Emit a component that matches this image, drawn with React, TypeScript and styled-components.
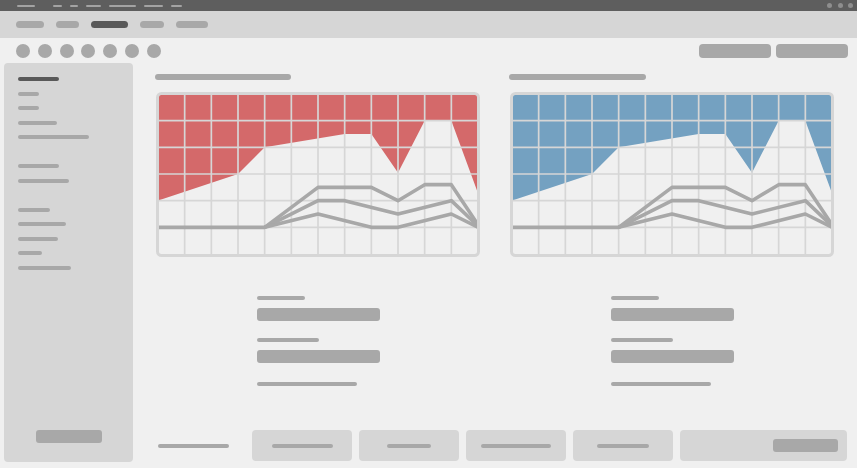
import React from "react";
import styled, { createGlobalStyle } from "styled-components";

const GlobalStyle = createGlobalStyle`
  html, body {
    margin: 0;
    padding: 0;
    background: #f0f0f0;
  }
  body {
    font-family: "Liberation Sans", Arial, sans-serif;
  }
`;

const Window = styled.div`
  width: 857px;
  height: 468px;
  display: flex;
  flex-direction: column;
  background: #f0f0f0;
  overflow: hidden;
`;

const TitleBar = styled.div`
  height: 11px;
  flex-shrink: 0;
  display: flex;
  align-items: center;
  padding: 0 4px 0 17px;
  background: #5e5e5e;
`;

const MenuGroup = styled.div`
  display: flex;
  gap: 8px;
  margin-left: 18px;
`;

const MenuLine = styled.div<{ $w: number }>`
  width: ${(p) => p.$w}px;
  height: 2px;
  border-radius: 1px;
  background: #a3a3a3;
`;

const WindowDots = styled.div`
  display: flex;
  gap: 5.5px;
  margin-left: auto;
`;

const WindowDot = styled.div`
  width: 5px;
  height: 5px;
  border-radius: 50%;
  background: #8e8e8e;
`;

const TabBar = styled.div`
  height: 27px;
  flex-shrink: 0;
  display: flex;
  align-items: center;
  gap: 12px;
  padding-left: 16px;
  background: #d6d6d6;
`;

const Tab = styled.div<{ $w: number; $active?: boolean }>`
  width: ${(p) => p.$w}px;
  height: 7px;
  border-radius: 4px;
  background: ${(p) => (p.$active ? "#595959" : "#a8a8a8")};
`;

const Toolbar = styled.div`
  height: 25px;
  flex-shrink: 0;
  display: flex;
  align-items: center;
  padding: 0 9px 0 16px;
`;

const ToolDots = styled.div`
  display: flex;
  gap: 7.8px;
`;

const ToolDot = styled.div`
  width: 14px;
  height: 14px;
  border-radius: 50%;
  background: #a8a8a8;
`;

const ToolButtons = styled.div`
  display: flex;
  gap: 5px;
  margin-left: auto;
`;

const ToolButton = styled.div`
  width: 72px;
  height: 14px;
  border-radius: 4px;
  background: #a8a8a8;
`;

const Body = styled.div`
  flex: 1;
  display: flex;
  min-height: 0;
`;

const Sidebar = styled.aside`
  width: 129px;
  margin: 0 0 6px 4px;
  padding: 14px 14px 19px;
  box-sizing: border-box;
  display: flex;
  flex-direction: column;
  background: #d6d6d6;
  border-radius: 4px;
`;

const NavList = styled.div`
  display: flex;
  flex-direction: column;
  gap: 25px;
`;

const NavGroup = styled.div`
  display: flex;
  flex-direction: column;
  gap: 10.5px;
`;

const NavLine = styled.div<{ $w: number; $active?: boolean }>`
  width: ${(p) => p.$w}px;
  height: 4px;
  border-radius: 2px;
  background: ${(p) => (p.$active ? "#595959" : "#a8a8a8")};
`;

const SidebarButton = styled.div`
  margin-top: auto;
  align-self: center;
  width: 66px;
  height: 13px;
  border-radius: 3px;
  background: #a8a8a8;
`;

const Main = styled.main`
  flex: 1;
  display: flex;
  flex-direction: column;
  padding: 11px 10px 7px 23px;
  min-width: 0;
`;

const Panels = styled.div`
  display: grid;
  grid-template-columns: 324px 324px;
  column-gap: 30px;
`;

const Panel = styled.section`
  display: flex;
  flex-direction: column;
`;

const PanelTitle = styled.div<{ $w: number }>`
  width: ${(p) => p.$w}px;
  height: 6px;
  margin-left: -1px;
  border-radius: 3px;
  background: #a8a8a8;
`;

const ChartSvg = styled.svg`
  display: block;
  margin-top: 12px;
`;

const Form = styled.div`
  align-self: center;
  width: 123px;
  margin-top: 39px;
  display: flex;
  flex-direction: column;
`;

const FieldLabel = styled.div<{ $w: number; $gap?: number }>`
  width: ${(p) => p.$w}px;
  height: 4px;
  margin-top: ${(p) => p.$gap ?? 0}px;
  border-radius: 2px;
  background: #a8a8a8;
`;

const FieldInput = styled.div`
  height: 13px;
  margin-top: 8px;
  border-radius: 3px;
  background: #a8a8a8;
`;

const Footer = styled.div`
  margin-top: auto;
  height: 31px;
  display: flex;
  align-items: center;
  gap: 7px;
  padding-left: 2px;
`;

const FooterCaption = styled.div`
  width: 71px;
  height: 4px;
  margin-right: 16px;
  border-radius: 2px;
  background: #a8a8a8;
`;

const FooterTab = styled.div`
  width: 100px;
  height: 31px;
  display: flex;
  align-items: center;
  justify-content: center;
  border-radius: 4px;
  background: #d6d6d6;
`;

const FooterTabLine = styled.div<{ $w: number }>`
  width: ${(p) => p.$w}px;
  height: 4px;
  border-radius: 2px;
  background: #a8a8a8;
`;

const FooterAction = styled.div`
  flex: 1;
  height: 31px;
  display: flex;
  align-items: center;
  justify-content: flex-end;
  padding-right: 9px;
  border-radius: 4px;
  background: #d6d6d6;
`;

const FooterButton = styled.div`
  width: 65px;
  height: 13px;
  border-radius: 3px;
  background: #a8a8a8;
`;

// grid of 12 x 6 cells, origin inset by 2px inside the frame
const CELL = 80 / 3;
const gx = (x: number) => 2 + x * CELL;
const gy = (y: number) => 2 + y * CELL;
const pts = (list: [number, number][]) =>
  list.map(([x, y]) => `${gx(x).toFixed(2)},${gy(y).toFixed(2)}`).join(" ");

const AREA: [number, number][] = [
  [0, 0], [12, 0], [12, 3.72], [11, 1], [10, 1], [9, 2.95],
  [8, 1.5], [7, 1.5], [4, 2], [3, 3], [0, 4],
];

const CURVES: [number, number][][] = [
  [[0, 5], [4, 5], [6, 3.5], [8, 3.5], [9, 4], [10, 3.4], [11, 3.4], [12, 4.9]],
  [[4, 5], [6, 4], [7, 4], [9, 4.5], [11, 4], [12, 4.95]],
  [[4, 5], [6, 4.5], [8, 5], [9, 5], [11, 4.5], [12, 5]],
];

function Chart({ id, fill }: { id: string; fill: string }) {
  return (
    <ChartSvg width={324} height={165} viewBox="0 0 324 165">
      <defs>
        <clipPath id={id}>
          <rect x={3} y={3} width={318} height={159} />
        </clipPath>
      </defs>
      <rect x={1.5} y={1.5} width={321} height={162} rx={4} fill="#f0f0f0" />
      <g clipPath={`url(#${id})`}>
        <polygon points={pts(AREA)} fill={fill} />
        {Array.from({ length: 11 }, (_, i) => (
          <line key={`v${i}`} x1={gx(i + 1)} x2={gx(i + 1)} y1={0} y2={165} stroke="#d6d6d6" strokeWidth={1.7} />
        ))}
        {Array.from({ length: 5 }, (_, i) => (
          <line key={`h${i}`} x1={0} x2={324} y1={gy(i + 1)} y2={gy(i + 1)} stroke="#d6d6d6" strokeWidth={1.7} />
        ))}
        {CURVES.map((c, i) => (
          <polyline key={i} points={pts(c)} fill="none" stroke="#a8a8a8" strokeWidth={3.6} strokeLinejoin="round" />
        ))}
      </g>
      <rect x={1.5} y={1.5} width={321} height={162} rx={4} fill="none" stroke="#d6d6d6" strokeWidth={3} />
    </ChartSvg>
  );
}

function ChartPanel({ id, fill, titleWidth }: { id: string; fill: string; titleWidth: number }) {
  return (
    <Panel>
      <PanelTitle $w={titleWidth} />
      <Chart id={id} fill={fill} />
      <Form>
        <FieldLabel $w={48} />
        <FieldInput />
        <FieldLabel $w={62} $gap={17} />
        <FieldInput />
        <FieldLabel $w={100} $gap={19} />
      </Form>
    </Panel>
  );
}

const menu = [9, 8, 15, 27, 19, 11];
const tabs = [28, 23, 37, 24, 32];
const navGroups = [
  [41, 21, 21, 39, 71],
  [41, 51],
  [32, 48, 40, 24, 53],
];

export default function App() {
  return (
    <>
      <GlobalStyle />
      <Window>
        <TitleBar>
          <MenuLine $w={18} />
          <MenuGroup>
            {menu.map((w, i) => (
              <MenuLine key={i} $w={w} />
            ))}
          </MenuGroup>
          <WindowDots>
            <WindowDot />
            <WindowDot />
            <WindowDot />
          </WindowDots>
        </TitleBar>
        <TabBar>
          {tabs.map((w, i) => (
            <Tab key={i} $w={w} $active={i === 2} />
          ))}
        </TabBar>
        <Toolbar>
          <ToolDots>
            {Array.from({ length: 7 }, (_, i) => (
              <ToolDot key={i} />
            ))}
          </ToolDots>
          <ToolButtons>
            <ToolButton />
            <ToolButton />
          </ToolButtons>
        </Toolbar>
        <Body>
          <Sidebar>
            <NavList>
              {navGroups.map((group, g) => (
                <NavGroup key={g}>
                  {group.map((w, i) => (
                    <NavLine key={i} $w={w} $active={g === 0 && i === 0} />
                  ))}
                </NavGroup>
              ))}
            </NavList>
            <SidebarButton />
          </Sidebar>
          <Main>
            <Panels>
              <ChartPanel id="clip-left" fill="#d4696a" titleWidth={136} />
              <ChartPanel id="clip-right" fill="#74a1c1" titleWidth={137} />
            </Panels>
            <Footer>
              <FooterCaption />
              <FooterTab>
                <FooterTabLine $w={61} />
              </FooterTab>
              <FooterTab>
                <FooterTabLine $w={44} />
              </FooterTab>
              <FooterTab>
                <FooterTabLine $w={70} />
              </FooterTab>
              <FooterTab>
                <FooterTabLine $w={52} />
              </FooterTab>
              <FooterAction>
                <FooterButton />
              </FooterAction>
            </Footer>
          </Main>
        </Body>
      </Window>
    </>
  );
}
